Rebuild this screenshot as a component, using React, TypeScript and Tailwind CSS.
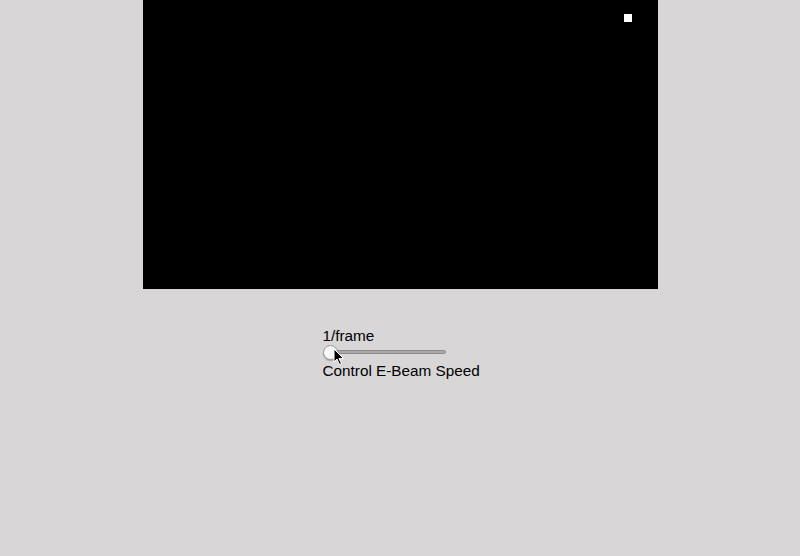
import React from "react";

export default function App() {
  return (
    <div
      className="w-[800px] h-[556px] bg-[#d8d6d7] flex flex-col items-center text-black"
      style={{ fontFamily: '"Liberation Sans", Arial, sans-serif' }}
    >
      <div className="w-[515px] h-[289px] bg-black shrink-0 relative">
        <div className="absolute left-[481px] top-[14px] w-[8px] h-[8px] bg-white" />
      </div>
      <div className="mt-[38px] w-[157px] pl-[1px] flex flex-col items-start text-[15.3px] leading-[18px]">
        <div>1/frame</div>
        <div className="relative w-[124px] h-[17px] flex items-center">
          <div className="absolute left-[4px] right-[1px] top-[5px] h-[4px] rounded-[2px] bg-[#aaa9aa] border border-[#8e8d8e]" />
          <div className="absolute left-0 top-0 w-[15px] h-[15px] rounded-full bg-[#f7f7f7] border border-[#9a9a9a] shadow-[0_1px_1px_rgba(0,0,0,0.25)]" />
          <svg
            className="absolute left-[10px] top-[3px]"
            width="12"
            height="18"
            viewBox="0 0 12 18"
          >
            <path
              d="M1 1 L1 14 L4 11 L6.5 16.5 L8.5 15.5 L6 10.5 L10.5 10.5 Z"
              fill="black"
              stroke="white"
              strokeWidth="1"
              strokeLinejoin="round"
            />
          </svg>
        </div>
        <div className="whitespace-nowrap">Control E-Beam Speed</div>
      </div>
    </div>
  );
}
